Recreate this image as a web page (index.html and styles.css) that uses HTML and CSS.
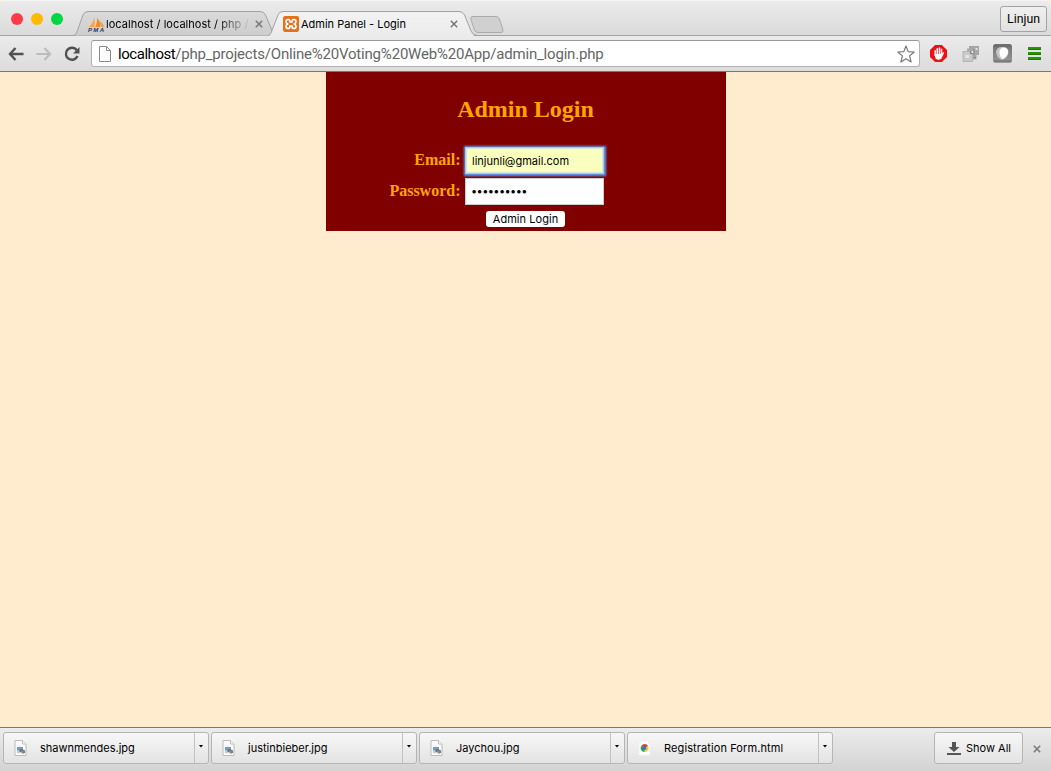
FILE: index.html
```html
<!DOCTYPE html>
<html lang="en">
<head>
<meta charset="utf-8">
<title>Admin Panel - Login</title>
<link rel="stylesheet" href="styles.css">
</head>
<body>
<svg class="defs" aria-hidden="true">
  <defs>
    <linearGradient id="tab-idle" x1="0" y1="0" x2="0" y2="1"><stop offset="0" stop-color="#dadada"/><stop offset="1" stop-color="#cdcdcd"/></linearGradient>
    <linearGradient id="tab-on" x1="0" y1="0" x2="0" y2="1"><stop offset="0" stop-color="#f3f3f3"/><stop offset="1" stop-color="#ebebeb"/></linearGradient>
    <linearGradient id="ghost" x1="0" y1="0" x2="0" y2="1"><stop offset="0" stop-color="#707070"/><stop offset="1" stop-color="#999"/></linearGradient>
    <symbol id="picture-file" viewBox="0 0 13 16">
      <path d="M1 .5h7.500l3.500 3.500v11.500H1z" fill="#fafafa" stroke="#bbb"/>
      <path d="M8.500.5v3.500H12" fill="#fff" stroke="#bbb"/>
      <path d="M3 7h6v3H3z" fill="#7799c6"/><path d="M3 10h3v3H3z" fill="#bcc9d5"/>
      <path d="M5 10l3-1 3 1.500v2.500H9L8 11.500l-2 1z" fill="#69717e"/><circle cx="9" cy="12" r="1.800" fill="#838994"/>
    </symbol>
    <symbol id="close" viewBox="0 0 8 8"><path d="M.8.8l6.400 6.400M7.200.8L.8 7.200" stroke="#777" stroke-width="1.500"/></symbol>
  </defs>
</svg>

<header class="tab-strip">
  <div class="lights"><i class="light red"></i><i class="light amber"></i><i class="light green"></i></div>
  <div class="tab tab-idle">
    <svg class="tab-shape" viewBox="0 0 201 26"><path d="M-1 24.500Q1.500 24.500 2.500 22L9 4Q10.500.5 14 .5H186Q190 .5 191.500 4L199 22L201 24.500" fill="url(#tab-idle)" stroke="#a2a2a2"/></svg>
    <svg class="pma" viewBox="0 0 17 16"><path d="M6 0C7 4 7 7 6 10H1C4 7 6 4 6 0z" fill="#f9a33b"/><path d="M9 1C12 4 13 7 12 10H7C9 7 9 4 9 1z" fill="#f18b20"/><path d="M12 4C14 6 16 8 16 10h-3z" fill="#e5a050"/><text x="0" y="15" textLength="16">PMA</text></svg>
    <span class="tab-title fade">localhost / localhost / php /</span>
    <svg class="close"><use href="#close"/></svg>
  </div>
  <div class="tab tab-on">
    <svg class="tab-shape" viewBox="0 0 208 26"><path d="M0 25.500L2 22L9 4Q10 .5 14 .5H190Q194 .5 195.500 4L202 20Q204 25.500 208 25.500z" fill="url(#tab-on)"/><path d="M0 24.500L2 22L9 4Q10 .5 14 .5H190Q194 .5 195.500 4L202 20Q204 24.500 208 24.500" fill="none" stroke="#a2a2a2"/></svg>
    <svg class="xampp" viewBox="0 0 16 16"><rect width="16" height="16" rx="2" fill="#e5711c"/><path d="M5.300 3.500Q7 3.500 7 6H9Q9 3.500 10.700 3.500Q13 3.500 13 5.500Q13 7 11.500 8Q13 9 13 10.500Q13 12.500 10.700 12.500Q9 12.500 9 10H7Q7 12.500 5.300 12.500Q3 12.500 3 10.500Q3 9 4.500 8Q3 7 3 5.500Q3 3.500 5.300 3.500z" fill="none" stroke="#fff" stroke-width="1.700"/></svg>
    <span class="tab-title">Admin Panel - Login</span>
    <svg class="close"><use href="#close"/></svg>
  </div>
  <svg class="new-tab" viewBox="0 0 34 18"><path d="M3 .5H26Q28.500.5 29.500 3L33 14Q33.500 16.500 31 16.500H8Q5.500 16.500 4.500 14L.8 3Q.3.5 3 .5z" fill="#d0d0d0" stroke="#aaa"/></svg>
  <button class="profile">Linjun</button>
</header>

<nav class="toolbar">
  <svg class="nav-icon back" viewBox="0 0 16 14"><path d="M7.500 1L2 7l5.500 6M2 7h13.500" fill="none" stroke="#505050" stroke-width="2.400"/></svg>
  <svg class="nav-icon forward" viewBox="0 0 16 14"><path d="M8.500 1L14 7l-5.500 6M14 7H.5" fill="none" stroke="#bcbcbc" stroke-width="2.200"/></svg>
  <svg class="reload" viewBox="0 0 16 16"><path d="M12.800 4.300A6 6 0 1 0 13.500 10" fill="none" stroke="#505050" stroke-width="2.400"/><path d="M15.500 1v6.500H9z" fill="#505050"/></svg>
  <div class="address">
    <svg class="page-icon" viewBox="0 0 12 16"><path d="M.5.5H7.500L11.500 4.500V15.500H.5z" fill="#fcfcfc" stroke="#8b8b8b"/><path d="M7.500.5v4h4" fill="none" stroke="#8b8b8b"/></svg>
    <span class="url"><b>localhost</b>/php_projects/Online%20Voting%20Web%20App/admin_login.php</span>
    <svg class="star" viewBox="0 0 18 18"><path d="M9 1l2.200 5.600 6 .4-4.600 3.900L14.100 17 9 13.700 3.900 17l1.500-6.100L.8 7l6-.4z" fill="#fff" stroke="#777" stroke-width="1.200" stroke-linejoin="round"/></svg>
  </div>
  <svg class="adblock" viewBox="0 0 18 18"><path d="M5.400 0h7.200L18 5.400v7.200L12.600 18H5.400L0 12.600V5.400z" fill="#ed1016"/><path d="M5.500 6v5M7.700 4v6M10 3.200V10M12.200 4.500V11" stroke="#fff" stroke-width="1.600" stroke-linecap="round"/><path d="M4.700 9.500H12.500l1.300-1.800q1.300-.4 1.200.6L12 14.500q-3 2.300-6 0z" fill="#fff"/></svg>
  <svg class="stack" viewBox="0 0 18 18"><rect x="7" y="1" width="10" height="9" fill="#a5a5a5"/><rect x="5" y="3.500" width="9.500" height="11" fill="#aaa"/><path d="M1 6.500h7l2.500 2.500v7.500H1z" fill="#c9c9c9" stroke="#b5b5b5"/><path d="M3.500 10h3.500v3H3.500zM9.500 6h2v3h-2zM13.500 3h2v2h-2z" fill="#e6e6e6"/><path d="M8 6h1v2h2v1H8zM11.500 4h1v6h-1zM12 12h2v1h-2z" fill="#808080"/></svg>
  <svg class="ghost" viewBox="0 0 19 19"><rect width="19" height="19" rx="2.500" fill="url(#ghost)"/><path d="M1 2h17M1 17h17" stroke="#666"/><path d="M3 8Q3.500 3 9 3Q15.500 3 15.500 8Q15 14 9 16Q3 13 3 8z" fill="#c4c4c4"/><path d="M6.500 7Q8 3 11 3.500Q15.500 4 15 9Q13 14 9.500 15Q6 12 6.500 7z" fill="#fff"/></svg>
  <svg class="menu" viewBox="0 0 13 13"><path d="M0 1.500h13M0 6.500h13M0 11.500h13" stroke="#249600" stroke-width="3"/><path d="M0 2.500h13M0 7.500h13M0 12.500h13" stroke="#287200"/></svg>
</nav>

<main class="page">
  <form class="login">
    <h2>Admin Login</h2>
    <div class="row"><label for="email">Email:</label><input id="email" class="filled" type="text" value="linjunli@gmail.com"></div>
    <div class="row"><label for="password">Password:</label><input id="password" class="secret" type="text" value="••••••••••"></div>
    <button type="button" class="submit">Admin Login</button>
  </form>
</main>

<footer class="downloads">
  <div class="item"><svg class="file"><use href="#picture-file"/></svg><span class="name">shawnmendes.jpg</span><i class="more"></i></div>
  <div class="item"><svg class="file"><use href="#picture-file"/></svg><span class="name">justinbieber.jpg</span><i class="more"></i></div>
  <div class="item"><svg class="file"><use href="#picture-file"/></svg><span class="name">Jaychou.jpg</span><i class="more"></i></div>
  <div class="item"><svg class="file" viewBox="0 0 13 16"><path d="M1 1h8l3 3v11H1z" fill="#fff" stroke="#eee"/><path d="M6.500 8L3.200 6A4 4 0 0 1 10.100 6z" fill="#e33d30"/><path d="M6.500 8L10.100 6A4 4 0 0 1 6.500 12z" fill="#f6ca28"/><path d="M6.500 8v4A4 4 0 0 1 3.200 6z" fill="#22a45a"/><circle cx="6.500" cy="8" r="1.900" fill="#3577d4"/></svg><span class="name reg">Registration Form.html</span><i class="more"></i></div>
  <button class="show-all"><svg viewBox="0 0 14 13"><path d="M5 0h4v5h3.500L7 10 1.500 5H5zM0 11h14v2H0z" fill="#555"/></svg><span>Show All</span></button>
  <svg class="close"><use href="#close"/></svg>
</footer>
</body>
</html>
```

FILE: styles.css
```css
* { box-sizing: border-box; }
body { margin: 0; width: 1051px; height: 771px; display: flex; flex-direction: column; overflow: hidden; background: #ffebcd; font-family: Inter, sans-serif; font-size: 11px; color: #000; }
svg { display: block; flex: none; }
button { font: inherit; color: inherit; padding: 0; }
.defs { position: absolute; width: 0; height: 0; }

.tab-strip { flex: none; height: 36px; display: flex; align-items: flex-start; background: linear-gradient(#ebebeb, #dadada); border-top: 1px solid #f5f5f5; border-bottom: 1px solid #a2a2a2; border-radius: 4px 4px 0 0; }
.lights { display: flex; gap: 8px; padding: 12px 0 0 11px; width: 74px; flex: none; }
.light { width: 12px; height: 12px; border-radius: 50%; }
.red { background: #ff3b47; }
.amber { background: #ffb900; }
.green { background: #00d742; }
.tab { position: relative; height: 26px; margin-top: 10px; flex: none; display: flex; align-items: center; }
.tab-shape { position: absolute; left: 0; top: 0; width: 100%; height: 26px; overflow: visible; }
.tab-idle { width: 201px; padding-left: 14px; }
.tab-on { width: 208px; margin-left: -6px; padding-left: 14px; z-index: 1; }
.pma, .xampp, .tab-title, .tab .close { position: relative; }
.pma { width: 17px; height: 16px; margin-top: 1px; }
.pma text { font: italic bold 6px "Liberation Sans", sans-serif; fill: #2d3564; }
.xampp { width: 16px; height: 16px; }
.tab-title { width: 144px; margin-left: 1px; padding-bottom: 1px; font-size: 11px; white-space: nowrap; }
.tab-on .tab-title { width: 149px; margin-left: 2px; }
.fade { color: transparent; background: linear-gradient(90deg, #000 76%, #bbb 98%); background-clip: text; -webkit-background-clip: text; letter-spacing: .04px; }
.close { width: 8px; height: 8px; }
.tab-idle .close { margin-left: 5px; }
.new-tab { width: 34px; height: 18px; margin: 15px 0 0 -7px; }
.profile { width: 47px; height: 26px; margin: 5px 4px 0 auto; font-family: Roboto, sans-serif; font-size: 12.3px; border: 1px solid #a3a3a3; border-radius: 3px; background: linear-gradient(#f0f0f0, #e1e1e1); }

.toolbar { flex: none; height: 36px; display: flex; align-items: center; padding: 0 10px 0 8px; background: linear-gradient(#ebebeb, #dcdcdc); border-bottom: 1px solid #777; }
.nav-icon { width: 16px; height: 14px; }
.forward { margin-left: 12px; }
.reload { width: 16px; height: 16px; margin-left: 12px; }
.address { width: 829px; height: 27px; margin-left: 11px; padding: 0 4px 0 7px; display: flex; align-items: center; background: #fff; border: 1px solid #b2b2b2; border-top-color: #999; border-radius: 3px; }
.page-icon { width: 12px; height: 16px; }
.url { margin-left: 7px; color: #666; font-family: Roboto, sans-serif; font-size: 15px; letter-spacing: -.195px; white-space: nowrap; }
.url b { font-weight: 400; color: #000; letter-spacing: -.45px; }
.star { width: 18px; height: 18px; margin-left: auto; }
.adblock { width: 17px; height: 17px; margin-left: 10px; }
.stack { width: 18px; height: 18px; margin-left: 15px; }
.ghost { width: 19px; height: 19px; margin-left: 13px; }
.menu { width: 13px; height: 13px; margin-left: auto; }

.page { flex: 1; background: #ffebcd; }
.login { width: 400px; height: 159px; margin: 0 auto 0 326px; padding-top: 23px; background: maroon; color: orange; font: bold 16px "Liberation Serif", serif; display: flex; flex-direction: column; }
.login h2 { margin: 0 1px 23px 0; font-size: 24px; line-height: 28px; text-align: center; }
.row { display: flex; align-items: center; height: 28px; margin-bottom: 3px; }
.row label { width: 134.5px; margin-right: 4.5px; text-align: right; }
.row input { width: 139px; height: 27px; padding: 1px 5px; border: 1px solid #ccc; font: 11px Inter, sans-serif; background: #fff; color: #000; outline: none; }
.row .filled { padding: 2px 5px 1px 6px; background: #faffbd; border: 1px solid #a3cbf5; box-shadow: 0 0 2px 1.5px #5a9bf0, inset 0 0 1px 1px #d2e4dc; }
.row .secret { letter-spacing: -.6px; }
.submit { width: 79px; height: 16px; margin: 3px 0 0 160px; border: 0; border-radius: 3px; background: #fff; color: #000; font: 11px/16px Inter, sans-serif; letter-spacing: .05px; }

.downloads { flex: none; height: 44px; display: flex; align-items: flex-start; gap: 2px; padding: 4px 10px 0 3px; background: linear-gradient(#ececec, #d3d3d3); border-top: 1px solid #777; }
.item { width: 206px; height: 32px; padding-left: 10px; display: flex; align-items: center; border: 1px solid #b5b5b5; border-radius: 3px; background: linear-gradient(#f7f7f7, #e3e3e3); }
.file { width: 13px; height: 16px; }
.name { margin-left: 13px; white-space: nowrap; }
.reg { letter-spacing: .1px; }
.more { margin-left: auto; width: 14px; height: 30px; border-left: 1px solid #c2c2c2; display: flex; align-items: center; justify-content: center; }
.more::before { content: ""; width: 5px; height: 3px; background: #000; clip-path: polygon(0 0, 100% 0, 50% 100%); margin: -4px 1px 0 0; }
.show-all { width: 89px; height: 32px; margin-left: auto; padding-left: 12px; display: flex; align-items: center; gap: 5px; border: 1px solid #b5b5b5; border-radius: 3px; background: linear-gradient(#f7f7f7, #e3e3e3); white-space: nowrap; }
.show-all svg { width: 14px; height: 13px; }
.downloads > .close { margin: 13px 0 0 8px; }
```
